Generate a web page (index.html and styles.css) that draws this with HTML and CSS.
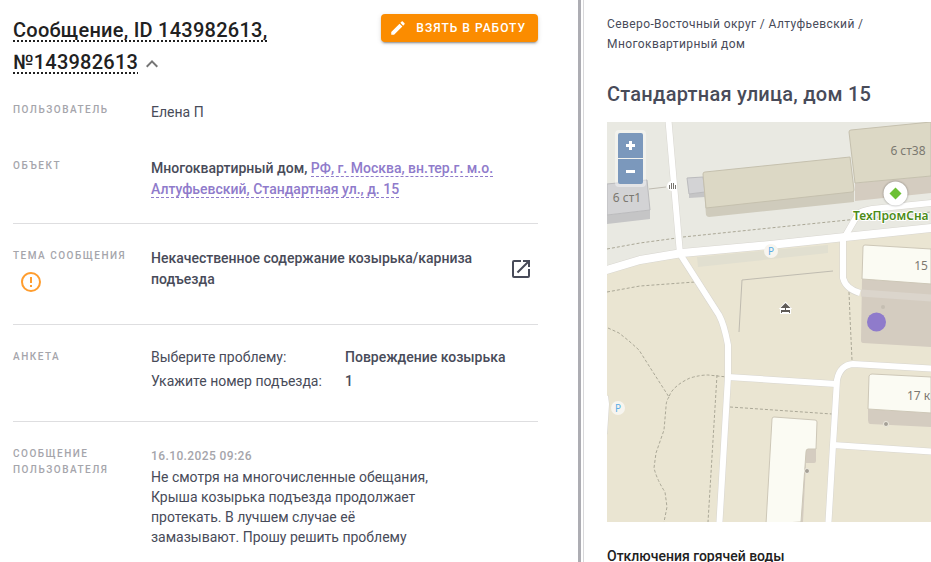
FILE: index.html
```html
<!DOCTYPE html>
<html lang="ru">
<head>
<meta charset="utf-8">
<meta name="viewport" content="width=device-width, initial-scale=1">
<title>Сообщение, ID 143982613</title>
<link rel="stylesheet" href="styles.css">
</head>
<body>
<div class="layout">
  <main class="message">
    <header class="message-header">
      <h1 class="title"><span class="title-text">Сообщение, ID 143982613, №143982613</span><button class="icon-button toggle" type="button" aria-label="Свернуть"><svg class="icon" viewBox="0 0 24 24" aria-hidden="true"><path d="M7.41 15.41 12 10.83l4.59 4.58L18 14l-6-6-6 6z"/></svg></button></h1>
      <button class="take-button" type="button">
        <svg class="take-icon" viewBox="0 0 24 24" aria-hidden="true"><path d="M20.71 7.04c.39-.39.39-1.04 0-1.41l-2.34-2.34c-.37-.39-1.02-.39-1.41 0l-1.84 1.83 3.75 3.75M3 17.25V21h3.75L17.81 9.93l-3.75-3.75z"/></svg>
        <span>Взять в работу</span>
      </button>
    </header>

    <section class="row row-user">
      <h2 class="label">Пользователь</h2>
      <p class="value">Елена П</p>
    </section>
    <section class="row row-object">
      <h2 class="label">Объект</h2>
      <p class="value strong">Многоквартирный дом, <a class="address" href="#object">РФ, г. Москва, вн.тер.г. м.о. Алтуфьевский, Стандартная ул., д. 15</a></p>
    </section>
    <section class="row row-topic">
      <div>
        <h2 class="label">Тема сообщения</h2>
        <svg class="icon alert" viewBox="0 0 24 24" role="img" aria-label="Внимание"><path d="M11 15h2v2h-2zm0-8h2v6h-2zm1-5C6.47 2 2 6.5 2 12a10 10 0 1 0 10-10m0 18a8 8 0 1 1 0-16 8 8 0 0 1 0 16"/></svg>
      </div>
      <div class="topic">
        <p class="value strong topic-text">Некачественное содержание козырька/карниза подъезда</p>
        <a class="open-link" href="#topic" aria-label="Открыть тему"><svg class="icon" viewBox="0 0 24 24" aria-hidden="true"><path d="M14 3v2h3.59l-9.83 9.83 1.41 1.41L19 6.41V10h2V3m-2 16H5V5h7V3H5a2 2 0 0 0-2 2v14a2 2 0 0 0 2 2h14a2 2 0 0 0 2-2v-7h-2z"/></svg></a>
      </div>
    </section>
    <section class="row row-form">
      <h2 class="label">Анкета</h2>
      <dl class="answers">
        <dt>Выберите проблему:</dt><dd>Повреждение козырька</dd>
        <dt>Укажите номер подъезда:</dt><dd>1</dd>
      </dl>
    </section>
    <section class="row row-text">
      <h2 class="label">Сообщение пользователя</h2>
      <div class="user-message">
        <time class="date" datetime="2025-10-16T09:26">16.10.2025 09:26</time>
        <p class="user-text">Не смотря на многочисленные обещания, Крыша козырька подъезда продолжает протекать. В лучшем случае её замазывают. Прошу решить проблему</p>
      </div>
    </section>
  </main>

  <aside class="object">
    <p class="path">Северо-Восточный округ / Алтуфьевский / Многоквартирный дом</p>
    <h2 class="object-title">Стандартная улица, дом 15</h2>
    <div class="map">
      <svg class="map-canvas" viewBox="607 122 324 400" preserveAspectRatio="xMinYMin slice" role="img" aria-label="Карта">
        <rect class="ground" x="607" y="122" width="324" height="400"/>
        <path class="industrial" d="M607 122H931V228L845 237 770 245 680 253 640 260 607 270Z"/>
        <path class="lot" d="M697 257 828 245V253L698 267Z"/>

        <g class="paths">
          <path d="M607 249 640 243 677 238M683 237 770 228 848 220 931 212"/>
          <path d="M607 292 640 286 695 282M849 292 850 317 852 360"/>
          <path d="M608 328 619 333 629 341 639 350 651 369 669 397C671 389 681 382 690 378Q700 375 708 375L727 377"/>
          <path d="M669 397Q666 401 666 407L664 430 656 453 654 468Q657 480 665 492L667 507 664 522"/>
          <path d="M717 375 708 522M730 407 832 414"/>
        </g>
        <path class="fence" d="M833 271 742 280 739 332M649 189 666 187"/>

        <path class="shade" d="M855 183 931 176V193L855 201Z"/>
        <g class="road-edge">
          <path class="main-road" d="M600 272 640 260 682 253 770 245 845 237 940 227"/>
          <path d="M668 115 680 254 719 315Q724 324 728 345V377L719 530"/>
          <path d="M728 377 836 384M940 202 872 209Q861 211 858 214L843 240V278Q846 289 860 293"/>
          <path d="M940 369 853 364Q840 365 837 380L833 445 828 530M833 445 940 452M605 396 606 404 604 434"/>
        </g>
        <g class="road">
          <path class="main-road" d="M600 272 640 260 682 253 770 245 845 237 940 227"/>
          <path d="M668 115 680 254 719 315Q724 324 728 345V377L719 530"/>
          <path d="M728 377 836 384M940 202 872 209Q861 211 858 214L843 240V278Q846 289 860 293"/>
          <path d="M940 369 853 364Q840 365 837 380L833 445 828 530M833 445 940 452M605 396 606 404 604 434"/>
        </g>
        <path class="shade" d="M862 279H931V347L863 343Q861 343 861 340Z"/>
        <path class="covered-road" d="M861 293 931 298"/>

        <path class="grey-side" d="M607 215 650 210V219L607 224Z"/>
        <path class="grey-roof" d="M607 184 647 180 650 210 607 215Z"/>
        <path class="grey-side" d="M689 194 705 192V197L689 198Z"/>
        <path class="grey-roof" d="M687 178 703 177 705 192 689 194Z"/>
        <path class="beige-side" d="M704 190 854 190V202L709 217Q707 217 706 215Z"/>
        <path class="beige-roof" d="M703 174Q703 172 705 172L850 157 854 190Q854 192 852 192L706 208Z"/>
        <path class="beige-roof" d="M849 132Q849 130 851 130L931 122V176L855 183Z"/>
        <path class="light-roof" d="M863 247Q863 245 865 245L931 249V284L862 279Z"/>
        <path class="shade" d="M868 409 931 413V427L870 424Q868 423 868 420Z"/>
        <path class="light-roof" d="M869 376Q870 374 872 374L931 377V413L868 409Z"/>
        <path class="shade" d="M806 449H816V461Q816 463 814 463L806 463 803 522H799Z"/>
        <path class="light-roof" d="M772 419Q772 417 774 417L815 420Q817 420 817 422L816 449H808Q806 449 806 452L801 522 766 524Z"/>
        <circle class="dot faint" cx="883" cy="307" r="2"/>
        <circle class="dot ringed" cx="886" cy="424" r="2.500"/>
        <circle class="dot ringed" cx="807" cy="471" r="2.500"/>

        <circle class="parking" cx="771" cy="251" r="7"/>
        <circle class="parking" cx="618" cy="408" r="7"/>
        <text class="parking-label" x="771" y="255">P</text>
        <text class="parking-label" x="618" y="412">P</text>

        <circle cx="672" cy="186" r="5" fill="#fff"/>
        <path class="gate" d="M669.500 185V189M671.500 183V189M673.500 183V189M675.500 185V189"/>
        <path class="shelter-halo" d="M785.500 303 790 308H781ZM781 310H790V313H781Z"/>
        <path class="shelter" d="M785.500 303 790.500 308H780.500ZM785 308H786V310H785ZM781 310H790V313H789V312H782V313H781Z"/>

        <text class="house" x="627" y="202">6 ст1</text>
        <text class="house" x="908" y="155">6 ст38</text>
        <text class="house" x="921" y="270">15</text>
        <text class="house house-start" x="907" y="400">17 к</text>
        <circle class="place" cx="895.500" cy="193.500" r="12"/>
        <path class="place-mark" d="M895.500 187.500 901.500 193.500 895.500 199.500 889.500 193.500Z"/>
        <text class="place-name" x="853" y="220">ТехПромСна</text>
        <circle class="pin" cx="876.500" cy="322" r="9.500"/>
      </svg>
      <div class="zoom">
        <button class="zoom-button" type="button" aria-label="Приблизить"><svg class="zoom-icon" viewBox="0 0 11 11" aria-hidden="true"><path d="M5.500 1V10M1 5.500H10"/></svg></button>
        <button class="zoom-button" type="button" aria-label="Отдалить"><svg class="zoom-icon" viewBox="0 0 11 11" aria-hidden="true"><path d="M1 5.500H10"/></svg></button>
      </div>
    </div>
    <h3 class="outages">Отключения горячей воды</h3>
  </aside>
</div>
</body>
</html>
```
FILE: styles.css
```css
* { box-sizing: border-box; }

body {
  margin: 0;
  font-family: Roboto, "Liberation Sans", sans-serif;
  font-size: 14px;
  line-height: 21px;
  color: #484b59;
  background: #fff;
}

h1, h2, h3, p, dl, dd { margin: 0; }

button {
  border: 0;
  padding: 0;
  font: inherit;
  cursor: pointer;
}

.layout {
  display: grid;
  grid-template-columns: minmax(0, 581fr) minmax(0, 350fr);
  height: 100vh;
  overflow: hidden;
}

.message {
  padding: 14px 40px 0 13px;
  border-right: 3px solid #adadb3;
  overflow: hidden;
}

.message-header {
  display: flex;
  justify-content: space-between;
  align-items: flex-start;
  gap: 24px;
  margin-bottom: 24px;
}

.title {
  max-width: 280px;
  font-size: 20px;
  line-height: 32px;
  font-weight: 500;
  letter-spacing: 0.25px;
  color: #212121;
}

.title-text {
  text-decoration: underline dotted 2px;
  text-underline-offset: 3px;
}

.icon {
  display: block;
  width: 24px;
  height: 24px;
  fill: currentColor;
}

.icon-button {
  color: #757575;
  background: none;
}

.toggle {
  display: inline-block;
  margin-left: 2px;
  vertical-align: middle;
}

.take-button {
  display: flex;
  flex: none;
  align-items: center;
  gap: 9px;
  height: 28px;
  padding: 0 12px 0 8px;
  border-radius: 4px;
  background: #fb8c00;
  color: #fff;
  font-size: 12px;
  font-weight: 500;
  letter-spacing: 1px;
  text-transform: uppercase;
  box-shadow: 0 3px 1px -2px rgba(0, 0, 0, .2), 0 2px 2px rgba(0, 0, 0, .14), 0 1px 5px rgba(0, 0, 0, .12);
}

.take-icon {
  width: 18px;
  height: 18px;
  fill: currentColor;
}

.row {
  display: grid;
  grid-template-columns: 138px minmax(0, 1fr);
  align-items: start;
}

.label {
  font-size: 10px;
  line-height: 16px;
  font-weight: 500;
  letter-spacing: 1.5px;
  text-transform: uppercase;
  color: #a5a5ab;
}

.strong { font-weight: 500; }

.row-user { padding-bottom: 35px; }

.row-object { padding-bottom: 23px; }

.row-topic,
.row-form,
.row-text {
  padding-top: 24px;
  border-top: 1px solid #dedee0;
}

.row-topic { padding-bottom: 30px; }

.row-form { padding-bottom: 32px; }

.address {
  color: #8f7bcb;
  text-decoration: none;
  border-bottom: 1px dashed #8f7bcb;
}

.alert {
  margin: 6px 0 0 6px;
  color: #ff9d2e;
}

.topic {
  display: flex;
  justify-content: space-between;
  padding-right: 5px;
}

.topic-text { max-width: 330px; }

.open-link {
  align-self: center;
  color: #484b59;
}

.answers {
  display: grid;
  grid-template-columns: 194px minmax(0, 1fr);
  row-gap: 8px;
  line-height: 16px;
}

.answers dd { font-weight: 500; }

.user-message { max-width: 280px; }

.date {
  display: block;
  font-size: 12px;
  font-weight: 500;
  letter-spacing: 0.4px;
  color: #a5a5ab;
}

.user-text { line-height: 20px; }

.object {
  margin-left: 2px;
  padding: 14px 0 0 23px;
  border-left: 1px solid #d8d8da;
  overflow: hidden;
}

.path {
  max-width: 280px;
  font-size: 12px;
  line-height: 20px;
  letter-spacing: 0.4px;
}

.object-title {
  margin: 24px 0 12px;
  font-size: 20px;
  line-height: 32px;
  font-weight: 500;
  letter-spacing: 0.25px;
}

.map {
  position: relative;
  height: 400px;
  overflow: hidden;
}

.map-canvas {
  display: block;
  width: 100%;
  height: 100%;
}

.ground { fill: #eae5d2; }
.industrial { fill: #e9e9e2; }
.lot { fill: #e1dfd0; }
.paths { fill: none; stroke: #aba897; stroke-width: 1; stroke-dasharray: 3 2; }
.fence { fill: none; stroke: #bfbbb0; }
.road, .road-edge { fill: none; stroke-linejoin: round; }
.road { stroke: #fff; stroke-width: 6; }
.road-edge { stroke: #d8d6d0; stroke-width: 7; }
.road .main-road { stroke-width: 8; }
.road-edge .main-road { stroke-width: 9; }
.covered-road { stroke: #dbd5cc; stroke-width: 7; }
.grey-side { fill: #c5c5c6; }
.grey-roof { fill: #d3d3d5; stroke: #bbbbbd; }
.beige-side { fill: #cfcbbc; }
.beige-roof { fill: #dcd8c5; stroke: #c5c0ae; }
.light-roof { fill: #fbfbf3; stroke: #cdc7b7; }
.shade { fill: #d4ccc0; }
.dot { fill: #a5a096; }
.faint { fill: #c5beb2; }
.ringed { stroke: #efece1; }
.parking { fill: #f7f5ef; }

.parking-label {
  font: 10px "Noto Sans", sans-serif;
  text-anchor: middle;
  fill: #5aaee5;
}

.gate { stroke: #77746e; stroke-width: 1; }
.shelter { fill: #5f5b57; }
.shelter-halo { fill: #fff; stroke: #fff; stroke-width: 2; }

.house {
  font: 12px "Noto Sans", sans-serif;
  text-anchor: middle;
  fill: #7b7870;
}

.house-start { text-anchor: start; }

.place {
  fill: #fff;
  filter: drop-shadow(0 0 1px rgba(0, 0, 0, .4));
}

.place-mark { fill: #6cc033; }

.place-name {
  font: 600 12px "Noto Sans", sans-serif;
  fill: #4c8c17;
  stroke: #fff;
  stroke-width: 2;
  paint-order: stroke;
}

.pin { fill: #8f7bcb; }

.zoom {
  position: absolute;
  top: 8px;
  left: 8px;
  display: grid;
  gap: 1px;
  padding: 3px;
  border-radius: 4px;
  background: rgba(255, 255, 255, .4);
}

.zoom-button {
  display: grid;
  place-items: center;
  width: 25px;
  height: 25px;
  background: #7b98bc;
}

.zoom-button:first-child { border-radius: 2px 2px 0 0; }

.zoom-button:last-child { border-radius: 0 0 2px 2px; }

.zoom-icon {
  width: 11px;
  height: 11px;
  stroke: #fff;
  stroke-width: 3;
}

.outages {
  margin-top: 24px;
  font-size: 14px;
  font-weight: 500;
  color: #212121;
}
```
